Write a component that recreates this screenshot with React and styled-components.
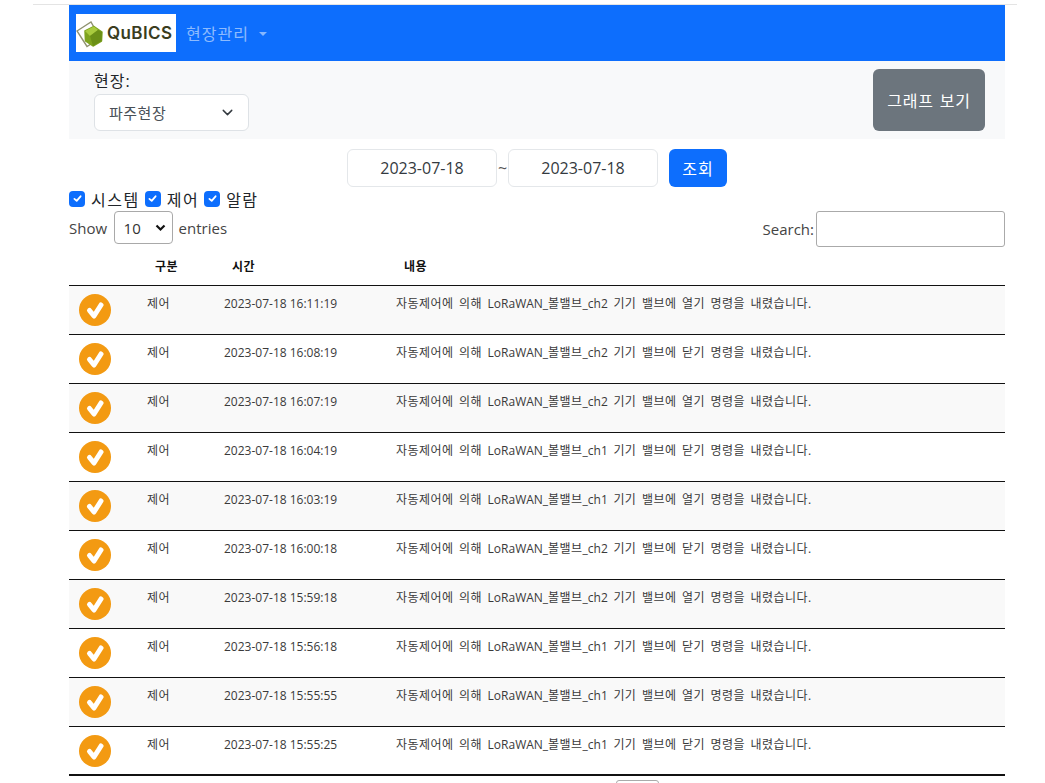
import React from 'react';
import styled, { createGlobalStyle } from 'styled-components';
import { ChevronDown } from 'lucide-react';

const FONT = `"Open Sans", "Noto Sans CJK KR", sans-serif`;

const rows = [
	['2023-07-18 16:11:19', 'ch2', '열기'],
	['2023-07-18 16:08:19', 'ch2', '닫기'],
	['2023-07-18 16:07:19', 'ch2', '열기'],
	['2023-07-18 16:04:19', 'ch1', '닫기'],
	['2023-07-18 16:03:19', 'ch1', '열기'],
	['2023-07-18 16:00:18', 'ch2', '닫기'],
	['2023-07-18 15:59:18', 'ch2', '열기'],
	['2023-07-18 15:56:18', 'ch1', '닫기'],
	['2023-07-18 15:55:55', 'ch1', '열기'],
	['2023-07-18 15:55:25', 'ch1', '닫기'],
];

const Logo = () => (
	<LogoBox>
		<svg width="30" height="30" viewBox="0 0 30 30">
			<path d="M1 13 L15 4 L24 20 L11 28.5 Z" fill="none" stroke="#8f9270" strokeWidth="1.4" />
			<path d="M9 13 L18 8.5 L26 14 L25.5 23 L17 28 L9.5 23 Z" fill="#7ea31f" stroke="#7ea31f" strokeWidth="1.5" strokeLinejoin="round" />
			<path d="M9 13 L18 8.5 L22 12 L14 18 Z" fill="#a9cb3e" />
			<path d="M22 12 L26 14 L25.5 23 L17 28 L14 18 Z" fill="#6b8f17" />
		</svg>
		<LogoText>QuBICS</LogoText>
	</LogoBox>
);

const CheckBox = () => (
	<CheckMark>
		<svg width="11" height="11" viewBox="0 0 16 16">
			<path d="M3.5 8.5 L6.8 11.5 L12.5 4.8" fill="none" stroke="#fff" strokeWidth="2.6" strokeLinecap="round" strokeLinejoin="round" />
		</svg>
	</CheckMark>
);

const StatusIcon = () => (
	<svg width="32" height="32" viewBox="0 0 32 32">
		<circle cx="16" cy="16" r="16" fill="#f39a12" />
		<path d="M10.5 16.5 L15 22 L22 11" fill="none" stroke="#fff" strokeWidth="5" strokeLinecap="round" strokeLinejoin="round" />
	</svg>
);

export default function App() {
	return (
		<>
			<GlobalStyle />
			<Page>
				<TopRule />
				<Container>
					<Navbar>
						<Logo />
						<NavLink>현장관리</NavLink>
						<Caret />
					</Navbar>
					<FilterBar>
						<SiteField>
							<SiteLabel>현장:</SiteLabel>
							<SiteSelect>
								파주현장
								<ChevronDown size={17} strokeWidth={2} color="#343a40" />
							</SiteSelect>
						</SiteField>
						<GraphButton>그래프 보기</GraphButton>
					</FilterBar>
					<DateRow>
						<DateInput>2023-07-18</DateInput>
						<Tilde>~</Tilde>
						<DateInput>2023-07-18</DateInput>
						<SearchButton>조회</SearchButton>
					</DateRow>
					<CheckRow>
						<CheckBox />
						<CheckLabel>시스템</CheckLabel>
						<CheckBox />
						<CheckLabel>제어</CheckLabel>
						<CheckBox />
						<CheckLabel>알람</CheckLabel>
					</CheckRow>
					<ToolRow>
						<Entries>
							Show
							<EntrySelect>
								10
								<svg width="11" height="8" viewBox="0 0 11 8">
									<path d="M1.5 1.5 L5.5 5.5 L9.5 1.5" fill="none" stroke="#111" strokeWidth="2.2" />
								</svg>
							</EntrySelect>
							entries
						</Entries>
						<SearchField>
							Search:
							<SearchInput />
						</SearchField>
					</ToolRow>
					<Table>
						<thead>
							<tr>
								<Th />
								<Th>구분</Th>
								<Th>시간</Th>
								<Th>내용</Th>
							</tr>
						</thead>
						<tbody>
							{rows.map(([time, ch, action]) => (
								<Row key={time}>
									<IconCell><StatusIcon /></IconCell>
									<Td><Han>제어</Han></Td>
									<Td>{time}</Td>
									<Td>
										<Han>자동제어에 의해 </Han>LoRaWAN_<Han>볼밸브</Han>_{ch}<Han> 기기 밸브에 {action} 명령을 내렸습니다.</Han>
									</Td>
								</Row>
							))}
						</tbody>
					</Table>
					<PageBox />
				</Container>
			</Page>
		</>
	);
}

const GlobalStyle = createGlobalStyle`
	html, body {
		margin: 0;
		padding: 0;
		background: #fff;
		overflow: hidden;
		height: 783px;
	}
	body {
		font-family: ${FONT};
		color: #212529;
	}
`;

const Page = styled.div`
	width: 1045px;
	height: 783px;
	overflow: hidden;
	padding-top: 4px;
	box-sizing: border-box;
`;

const TopRule = styled.div`
	width: 984px;
	height: 1px;
	margin-left: 33px;
	background: #e4e4e4;
`;

const Container = styled.div`
	width: 936px;
	margin-left: 69px;
`;

const Navbar = styled.nav`
	height: 56px;
	background: #0d6efd;
	display: flex;
	align-items: center;
	padding-left: 7px;
`;

const LogoBox = styled.div`
	width: 100px;
	height: 38px;
	background: #fff;
	display: flex;
	align-items: center;
	box-sizing: border-box;
`;

const LogoText = styled.span`
	font-family: "Inter", sans-serif;
	font-size: 17px;
	font-weight: 600;
	color: #3a3d1e;
	margin-left: 1px;
	letter-spacing: 0.4px;
`;

const NavLink = styled.span`
	font-size: 16px;
	letter-spacing: 1px;
	color: rgba(255, 255, 255, 0.55);
	margin-left: 10px;
`;

const Caret = styled.span`
	width: 0;
	height: 0;
	margin-left: 10px;
	margin-top: 2px;
	border-left: 4px solid transparent;
	border-right: 4px solid transparent;
	border-top: 4px solid rgba(255, 255, 255, 0.5);
`;

const FilterBar = styled.div`
	height: 78px;
	background: #f8f9fa;
	display: flex;
	justify-content: space-between;
	padding: 8px 20px 0 25px;
	box-sizing: border-box;
`;

const SiteField = styled.div`
	display: flex;
	flex-direction: column;
`;

const SiteLabel = styled.label`
	font-size: 16px;
	letter-spacing: 1px;
	line-height: 24px;
	height: 25px;
`;

const SiteSelect = styled.div`
	width: 155px;
	height: 37px;
	background: #fff;
	border: 1px solid #dee2e6;
	border-radius: 6px;
	box-sizing: border-box;
	display: flex;
	align-items: center;
	justify-content: space-between;
	padding: 0 12px 0 14px;
	font-size: 15px;
	letter-spacing: 0.5px;
	color: #495057;
`;

const GraphButton = styled.button`
	width: 112px;
	height: 62px;
	background: #6c757d;
	color: #fff;
	border: 0;
	border-radius: 6px;
	font-family: ${FONT};
	font-size: 16px;
	letter-spacing: 0.8px;
	word-spacing: 1px;
	padding: 0;
`;

const DateRow = styled.div`
	display: flex;
	justify-content: center;
	align-items: center;
	height: 38px;
	margin-top: 10px;
`;

const DateInput = styled.div`
	width: 150px;
	height: 38px;
	box-sizing: border-box;
	border: 1px solid #e4e7ea;
	border-radius: 6px;
	display: flex;
	align-items: center;
	justify-content: center;
	font-size: 16px;
	color: #343a40;
`;

const Tilde = styled.span`
	width: 11px;
	text-align: center;
	font-size: 16px;
	color: #555;
`;

const SearchButton = styled.button`
	width: 58px;
	height: 38px;
	margin-left: 11px;
	background: #0d6efd;
	color: #fff;
	border: 0;
	border-radius: 6px;
	font-family: ${FONT};
	font-size: 16px;
	letter-spacing: 1px;
	padding: 0;
`;

const CheckRow = styled.div`
	display: flex;
	align-items: center;
	height: 24px;
	padding-bottom: 1px;
	box-sizing: border-box;
`;

const CheckMark = styled.span`
	width: 16px;
	height: 16px;
	border-radius: 4px;
	background: #0d6efd;
	display: flex;
	align-items: center;
	justify-content: center;
`;

const CheckLabel = styled.span`
	font-size: 16px;
	letter-spacing: 1.5px;
	margin: 0 5px 0 6px;
	color: #212529;
`;

const ToolRow = styled.div`
	display: flex;
	justify-content: space-between;
	align-items: flex-start;
	height: 36px;
`;

const Entries = styled.div`
	display: flex;
	align-items: center;
	height: 33px;
	font-size: 15px;
	color: #444;
`;

const EntrySelect = styled.div`
	width: 59px;
	height: 33px;
	margin: 0 6px 0 6.5px;
	padding: 0 6px 0 9px;
	box-sizing: border-box;
	border: 1px solid #a9a9a9;
	border-radius: 4px;
	display: flex;
	align-items: center;
	justify-content: space-between;
	color: #333;
	font-size: 15px;
`;

const SearchField = styled(Entries)`
	height: 36px;
	gap: 2px;
`;

const SearchInput = styled.div`
	width: 189px;
	height: 36px;
	border: 1px solid #aaa;
	border-radius: 3px;
	box-sizing: border-box;
`;

const Table = styled.table`
	width: 936px;
	border-collapse: collapse;
	table-layout: fixed;
	margin-top: 1px;
	border-bottom: 2px solid #111;
`;

const Th = styled.th`
	height: 37px;
	padding: 0;
	font-size: 12px;
	font-weight: 700;
	letter-spacing: 0.4px;
	color: #111;
	text-align: left;
	box-sizing: border-box;
	border-bottom: 1px solid #111;
	&:nth-child(1) { width: 78px; }
	&:nth-child(2) { width: 77px; padding-left: 8px; }
	&:nth-child(3) { width: 172px; padding-left: 8px; }
	&:nth-child(4) { padding-left: 8px; }
`;

const Row = styled.tr`
	height: 49px;
	border-top: 1px solid #111;
	&:nth-child(odd) { background: #f9f9f9; }
`;

const Td = styled.td`
	vertical-align: top;
	padding: 10px 0 0 0;
	font-size: 12px;
	line-height: 16px;
	color: #3a3a3a;
	white-space: nowrap;
`;

const Han = styled.span`
	letter-spacing: 0.45px;
	word-spacing: 2px;
`;

const IconCell = styled(Td)`
	padding: 8px 0 0 10px;
	line-height: 0;
`;

const PageBox = styled.div`
	width: 43px;
	height: 20px;
	margin: 4px 0 0 547px;
	border: 1px solid #aaa;
	border-radius: 3px;
	box-sizing: border-box;
`;
